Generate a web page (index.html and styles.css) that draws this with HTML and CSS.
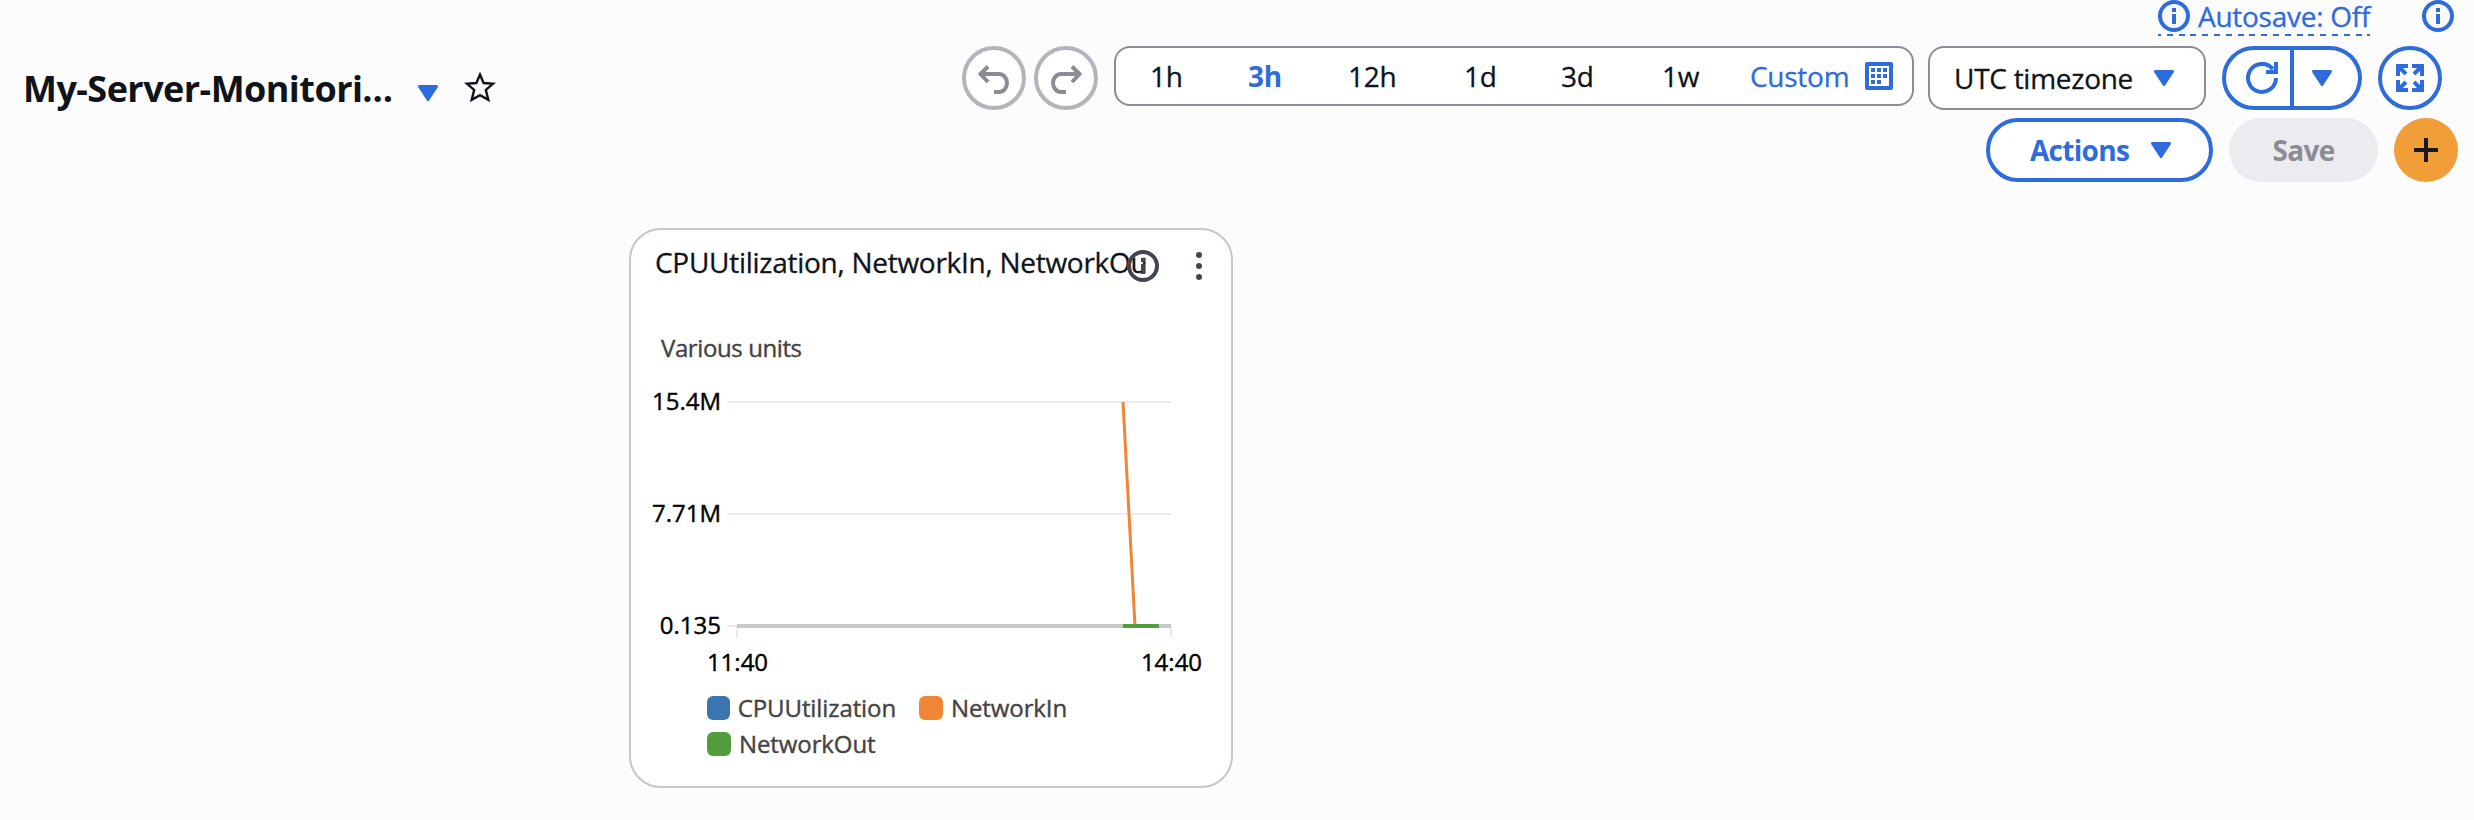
FILE: index.html
```html
<!DOCTYPE html>
<html lang="en">
<head>
<meta charset="utf-8">
<title>My-Server-Monitoring</title>
<link rel="stylesheet" href="styles.css">
</head>
<body>
<svg class="defs" width="0" height="0" aria-hidden="true">
  <symbol id="caret" viewBox="0 0 20 16"><path d="M1.500 1.500H18.500L10 14.500Z" fill="currentColor" stroke="currentColor" stroke-width="3" stroke-linejoin="round"/></symbol>
  <symbol id="info" viewBox="0 0 32 32"><circle cx="16" cy="16" r="14" fill="none" stroke="currentColor" stroke-width="4"/><path d="M14 8h4v4h-4zM14 14h4v10h-4z" fill="currentColor"/></symbol>
</svg>
<header class="header">
  <div class="heading">
    <h1 class="title">My-Server-Monitori…</h1>
    <svg class="caret title-caret"><use href="#caret"/></svg>
    <svg class="star" viewBox="0 0 32 32"><path d="M16 3.500l3.600 8.500 9.400.800-7.200 6.100 2.500 9.900L16 24.100l-8.300 4.700 2.500-9.900L3 12.800l9.400-.8z" fill="none" stroke="currentColor" stroke-width="2.400"/></svg>
  </div>
  <div class="controls">
    <div class="status">
      <span class="autosave"><svg class="info"><use href="#info"/></svg><span>Autosave: Off</span></span>
      <svg class="info"><use href="#info"/></svg>
    </div>
    <div class="toolbar">
      <button class="round disabled"><svg class="arrow" viewBox="0 0 32 32"><path d="M2 12h19a8 9 0 0 1 0 18h-5M10 4.500L2.600 12l7.400 8" fill="none" stroke="currentColor" stroke-width="4"/></svg></button>
      <button class="round disabled"><svg class="arrow" viewBox="0 0 32 32"><path d="M30 12H11a8 9 0 0 0 0 18h5M22 4.500l7.400 7.500-7.400 8" fill="none" stroke="currentColor" stroke-width="4"/></svg></button>
      <div class="ranges">
        <span>1h</span><span class="selected">3h</span><span>12h</span><span>1d</span><span>3d</span><span>1w</span>
        <span class="custom">Custom</span>
        <svg class="calendar" viewBox="0 0 28 28"><rect width="28" height="28" rx="2" fill="currentColor"/><path d="M4 4h20v20H4z" fill="#fff"/><path d="M6 6h4v4H6zM12 6h4v4h-4zM18 6h4v4h-4zM6 12h4v4H6zM12 12h4v4h-4zM18 12h4v4h-4zM6 18h4v4H6zM12 18h4v4h-4z" fill="currentColor"/></svg>
      </div>
      <button class="timezone"><span>UTC timezone</span><svg class="caret"><use href="#caret"/></svg></button>
      <div class="refresh">
        <button class="refresh-main"><svg class="refresh-icon" viewBox="0 0 32 32"><path d="M30 16a14 14 0 1 1-3.200-9M20 10h10V0" fill="none" stroke="currentColor" stroke-width="4"/></svg></button>
        <button class="refresh-menu"><svg class="caret"><use href="#caret"/></svg></button>
      </div>
      <button class="round"><svg class="expand" viewBox="0 0 28 28"><g fill="none" stroke="currentColor" stroke-width="4"><path d="M12 2H2v10M3 3l7 7"/><path d="M16 2h10v10M25 3l-7 7"/><path d="M12 26H2V16M3 25l7-7"/><path d="M16 26h10V16M25 25l-7-7"/></g></svg></button>
    </div>
    <div class="toolbar second">
      <button class="actions"><span>Actions</span><svg class="caret"><use href="#caret"/></svg></button>
      <button class="save">Save</button>
      <button class="add"><svg class="plus" viewBox="0 0 24 24"><path d="M12 0v24M0 12h24" stroke="currentColor" stroke-width="4"/></svg></button>
    </div>
  </div>
</header>
<main class="board">
  <section class="card">
    <div class="card-head">
      <h2 class="card-title">CPUUtilization, NetworkIn, NetworkOu</h2>
      <svg class="info"><use href="#info"/></svg>
      <svg class="dots" viewBox="0 0 6 28"><circle cx="3" cy="3" r="3"/><circle cx="3" cy="14" r="3"/><circle cx="3" cy="25" r="3"/></svg>
    </div>
    <p class="units">Various units</p>
    <svg class="chart" viewBox="631 380 600 304">
      <path d="M727 402H1171M727 514H1171M727 626H737M737 626V638M1171 626V638" stroke="#ececed" stroke-width="2"/>
      <path d="M737 626H1171" stroke="#c9c9c8" stroke-width="4"/>
      <path d="M1123 402L1135 626" stroke="#ef8636" stroke-width="3"/>
      <path d="M1123 626H1159" stroke="#529e3f" stroke-width="4"/>
      <g class="axis" text-anchor="end"><text x="721" y="410">15.4M</text><text x="721" y="522">7.71M</text><text x="721" y="634">0.135</text></g>
      <g class="axis" text-anchor="middle"><text x="737.500" y="671">11:40</text><text x="1171.500" y="671">14:40</text></g>
    </svg>
    <ul class="legend">
      <li><i class="swatch blue"></i>CPUUtilization</li>
      <li><i class="swatch orange"></i>NetworkIn</li>
      <li><i class="swatch green"></i>NetworkOut</li>
    </ul>
  </section>
</main>
</body>
</html>
```
FILE: styles.css
```css
* { box-sizing: border-box; }
body {
  margin: 0;
  height: 820px;
  background: #fcfcfc;
  color: #0f141a;
  font: 28px/32px "Open Sans", "Noto Sans", sans-serif;
  letter-spacing: -0.27px;
  overflow: hidden;
}
button {
  font: inherit;
  letter-spacing: inherit;
  padding: 0;
  margin: 0;
  background: #fff;
  color: #2e6bdb;
  border: 4px solid #2e6bdb;
  display: flex;
  align-items: center;
  height: 64px;
}
svg { display: block; flex: none; }
.defs { position: absolute; }
.header { display: flex; justify-content: space-between; height: 228px; }
.heading { display: flex; align-items: flex-start; padding: 64px 0 0 23px; }
.title {
  margin: 0;
  width: 395px;
  font-size: 36px;
  line-height: 50px;
  font-weight: 700;
  letter-spacing: -0.55px;
  white-space: nowrap;
}
.caret { width: 20px; height: 16px; color: #2e6bdb; }
.title-caret { margin-top: 21px; }
.star { width: 32px; height: 32px; margin: 7px 0 0 26px; }
.info { width: 32px; height: 32px; }
.controls { display: flex; flex-direction: column; align-items: flex-end; }
.status {
  display: flex;
  gap: 52px;
  height: 46px;
  padding-right: 20px;
  color: #2e6bdb;
}
.autosave {
  display: flex;
  gap: 8px;
  width: 212px;
  height: 36px;
  white-space: nowrap;
  background: repeating-linear-gradient(90deg, #2e6bdb 0 6px, transparent 6px 11.800px) -3px 34px / 215px 2px no-repeat;
}
.autosave, .timezone, .ranges, .card-title { -webkit-text-stroke: 0.3px currentColor; }
.toolbar { display: flex; height: 72px; padding-right: 32px; align-items: flex-start; }
.round { width: 64px; border-radius: 50%; justify-content: center; margin-right: 8px; }
.round:last-child { margin: 0 0 0 16px; }
.disabled { border-color: #b4b4bb; color: #8c8c94; }
.disabled + .disabled { margin-right: 16px; }
.arrow { width: 32px; height: 32px; }
.ranges {
  display: grid;
  grid-template-columns: 98px 100px 116px 97px 101px 88px 115px 28px;
  align-items: center;
  width: 800px;
  height: 60px;
  padding-left: 34px;
  background: #fff;
  border: 2px solid #8c8c94;
  border-radius: 16px;
}
.ranges .selected { color: #2e6bdb; font-weight: 700; -webkit-text-stroke: 0; }
.ranges .custom { color: #2e6bdb; }
.calendar { width: 28px; height: 28px; color: #2e6bdb; }
.timezone {
  width: 278px;
  margin-left: 14px;
  padding: 0 30px 0 24px;
  justify-content: space-between;
  border: 2px solid #8c8c94;
  border-radius: 16px;
  color: #0f141a;
}
.refresh { display: flex; width: 140px; margin-left: 16px; }
.refresh-main { width: 72px; padding-left: 20px; border-radius: 32px 0 0 32px; }
.refresh-menu { width: 68px; padding-left: 18px; border-left: 0; border-radius: 0 32px 32px 0; }
.refresh-icon { width: 32px; height: 32px; }
.expand { width: 28px; height: 28px; }
.second { padding-right: 16px; gap: 16px; font-weight: 700; letter-spacing: -0.7px; }
.actions { width: 227px; padding: 0 38px 0 40px; justify-content: space-between; border-radius: 32px; }
.save { width: 149px; justify-content: center; border: 0; border-radius: 32px; background: #ebebf0; color: #8c8c94; }
.add { width: 64px; justify-content: center; border: 0; border-radius: 50%; background: #f19e38; color: #16191f; }
.plus { width: 24px; height: 24px; }
.board { padding-left: 629px; }
.card {
  width: 604px;
  height: 560px;
  background: #fff;
  border: 2px solid #c6c6cd;
  border-radius: 32px;
}
.card-head { display: flex; align-items: center; height: 72px; padding: 0 29px 0 24px; }
.card-title {
  flex: none;
  margin: -8px 0 0;
  width: 490px;
  font-size: 28px;
  line-height: 40px;
  font-weight: 400;
  white-space: nowrap;
}
.card-head .info { margin: 0 37px 0 -18px; color: #424650; }
.dots { width: 6px; height: 28px; fill: #424650; }
.units {
  margin: 30px 0 16px 30px;
  font-size: 24px;
  color: #444;
  letter-spacing: -0.4px;
  -webkit-text-stroke: 0.4px currentColor;
}
.chart { width: 600px; height: 304px; }
.axis { font-size: 24px; fill: #000; stroke: #000; stroke-width: 0.4px; letter-spacing: 0; }
.legend {
  display: flex;
  flex-wrap: wrap;
  gap: 12px 23px;
  width: 460px;
  margin: 12px 0 0 76px;
  padding: 0;
  list-style: none;
  color: #444;
  font-size: 24px;
  line-height: 24px;
  letter-spacing: -0.1px;
  -webkit-text-stroke: 0.4px currentColor;
}
.legend li { display: flex; gap: 8px; }
.legend li:first-child { width: 189px; }
.swatch { width: 24px; height: 24px; border-radius: 6px; }
.blue { background: #3b75af; }
.orange { background: #ef8636; }
.green { background: #529e3f; }
```
